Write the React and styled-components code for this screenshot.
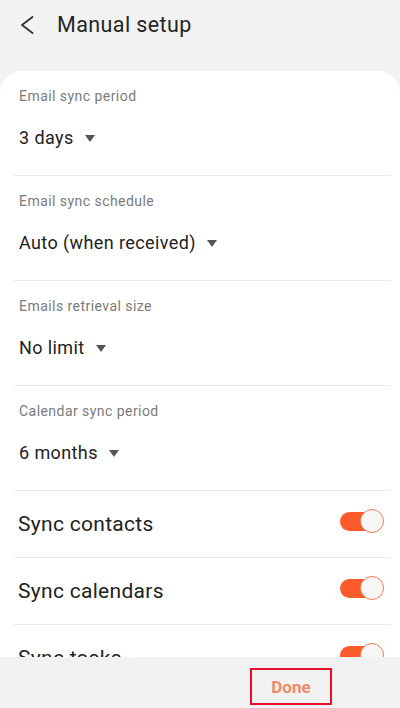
import React from "react";
import styled, { createGlobalStyle } from "styled-components";

const GlobalStyle = createGlobalStyle`
  html, body {
    margin: 0;
    padding: 0;
    background: #f2f2f2;
    font-family: Roboto, "Liberation Sans", Arial, sans-serif;
  }
`;

const Screen = styled.div`
  width: 400px;
  height: 708px;
  display: flex;
  flex-direction: column;
  background: #f2f2f2;
  overflow: hidden;
`;

const Header = styled.div`
  height: 71px;
  box-sizing: border-box;
  padding: 11px 0 0 20px;
  display: flex;
  align-items: flex-start;
  gap: 23px;
  flex-shrink: 0;
`;

const BackButton = styled.button`
  border: 0;
  background: none;
  padding: 0;
  margin-top: 5px;
  width: 14px;
  height: 18px;
  display: flex;
`;

const Title = styled.h1`
  margin: 0;
  font-size: 21.5px;
  line-height: 28px;
  font-weight: 400;
  letter-spacing: 0.4px;
  color: #252525;
`;

const Scroll = styled.div`
  flex: 1;
  overflow: hidden;
`;

const Card = styled.div`
  background: #fff;
  border-radius: 22px 22px 0 0;
  min-height: 100%;
`;

const Section = styled.div`
  margin: 0 9px 0 14px;
  padding: 15px 0 24px 5px;
  border-bottom: 1px solid #ececec;
  display: flex;
  flex-direction: column;
  gap: 19px;
`;

const Label = styled.div`
  font-size: 14px;
  line-height: 20px;
  letter-spacing: 0.45px;
  color: #7b7b7b;
`;

const Value = styled.div`
  display: flex;
  align-items: center;
  gap: 11px;
  font-size: 18px;
  line-height: 26px;
  letter-spacing: 0.4px;
  color: #222;
`;

const Caret = styled.span`
  width: 0;
  height: 0;
  border-left: 5px solid transparent;
  border-right: 5px solid transparent;
  border-top: 7px solid #555;
  margin-top: 1px;
`;

const ToggleRow = styled.div`
  margin: 0 9px 0 14px;
  padding: 0 8px 0 4px;
  height: 66px;
  border-bottom: 1px solid #ececec;
  display: flex;
  align-items: center;
  justify-content: space-between;
  font-size: 21px;
  letter-spacing: 0.3px;
  color: #222;
`;

const Switch = styled.span`
  position: relative;
  width: 43px;
  height: 19px;
  border-radius: 10px;
  background: ${(p) => (p.$on ? "#fb5b2b" : "#c9c9c9")};
  margin-top: -5px;
`;

const Thumb = styled.span`
  position: absolute;
  top: -3px;
  right: -1px;
  width: 24px;
  height: 24px;
  box-sizing: border-box;
  border-radius: 50%;
  background: #f7f7f7;
  border: 1.5px solid #f47a55;
`;

const Footer = styled.div`
  height: 51px;
  flex-shrink: 0;
  background: #f2f2f2;
  display: flex;
  justify-content: flex-end;
  align-items: flex-start;
  padding: 11px 68px 0 0;
  box-sizing: border-box;
`;

const DoneButton = styled.button`
  width: 82px;
  height: 37px;
  box-sizing: border-box;
  border: 2px solid #e3102c;
  background: transparent;
  font-family: inherit;
  font-size: 17px;
  font-weight: 700;
  color: #f08a6b;
  padding: 0;
`;

const selects = [
  { label: "Email sync period", value: "3 days" },
  { label: "Email sync schedule", value: "Auto (when received)" },
  { label: "Emails retrieval size", value: "No limit" },
  { label: "Calendar sync period", value: "6 months" },
];

const toggles = ["Sync contacts", "Sync calendars", "Sync tasks"];

export default function App() {
  return (
    <>
      <GlobalStyle />
      <Screen>
        <Header>
          <BackButton aria-label="Back">
            <svg width="14" height="18" viewBox="0 0 14 18">
              <polyline
                points="12.5,1 2,9 12.5,17"
                fill="none"
                stroke="#333"
                strokeWidth="1.8"
                strokeLinecap="round"
                strokeLinejoin="round"
              />
            </svg>
          </BackButton>
          <Title>Manual setup</Title>
        </Header>
        <Scroll>
          <Card>
            {selects.map((s) => (
              <Section key={s.label}>
                <Label>{s.label}</Label>
                <Value>
                  {s.value}
                  <Caret />
                </Value>
              </Section>
            ))}
            {toggles.map((t) => (
              <ToggleRow key={t}>
                {t}
                <Switch $on>
                  <Thumb />
                </Switch>
              </ToggleRow>
            ))}
          </Card>
        </Scroll>
        <Footer>
          <DoneButton>Done</DoneButton>
        </Footer>
      </Screen>
    </>
  );
}
